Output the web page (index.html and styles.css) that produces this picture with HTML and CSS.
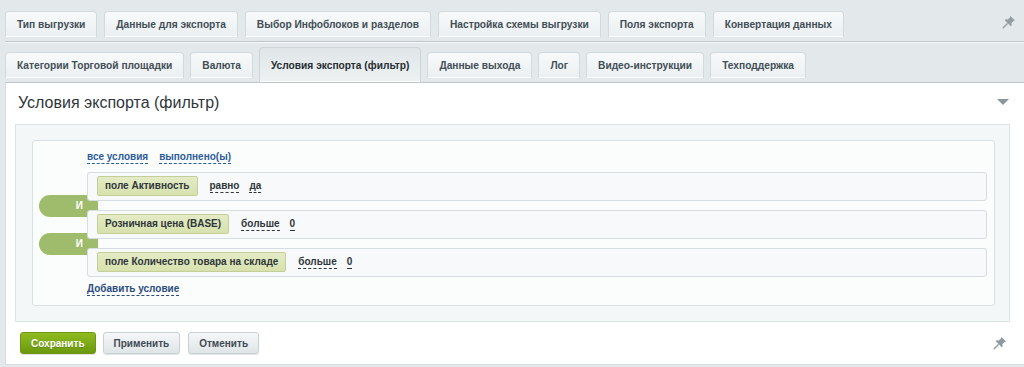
FILE: index.html
```html
<!DOCTYPE html>
<html lang="ru">
  <head>
    <meta charset="UTF-8" />
    <meta name="viewport" content="width=device-width, initial-scale=1.0" />
    <title>Условия экспорта (фильтр)</title>
    <link rel="stylesheet" href="styles.css">
  </head>
  <body>
    <div class="page">
      <div class="tabs tabs-top">
        <span class="tab">Тип выгрузки</span>
        <span class="tab">Данные для экспорта</span>
        <span class="tab">Выбор Инфоблоков и разделов</span>
        <span class="tab">Настройка схемы выгрузки</span>
        <span class="tab">Поля экспорта</span>
        <span class="tab">Конвертация данных</span>
        <span class="pin pin-top">
          <svg width="14" height="14" viewBox="0 0 14 14">
            <path d="M8.5 1 L13 5.5 L11.6 6.1 L9.4 8.3 L9.7 10.4 L8.8 11.3 L2.7 5.2 L3.6 4.3 L5.7 4.6 L7.9 2.4 Z" fill="#939da2" />
            <path d="M5.2 8.8 L1.2 12.8" stroke="#939da2" stroke-width="1.3" stroke-linecap="round" />
          </svg>
        </span>
      </div>

      <div class="tabs tabs-bottom">
        <span class="tab">Категории Торговой площадки</span>
        <span class="tab">Валюта</span>
        <span class="tab tab-active">Условия экспорта (фильтр)</span>
        <span class="tab">Данные выхода</span>
        <span class="tab">Лог</span>
        <span class="tab">Видео-инструкции</span>
        <span class="tab">Техподдержка</span>
      </div>

      <div class="panel">
        <div class="panel-head">
          <h2>Условия экспорта (фильтр)</h2>
          <span class="collapse"></span>
        </div>

        <div class="filter-box">
          <div class="tree">
            <div class="tree-head">
              <a class="link-blue">все условия</a>
              <a class="link-blue">выполнено(ы)</a>
            </div>

            <div class="conds">
              <!-- green "И" joints sit under the rows -->
              <span class="joint joint-1">И</span>
              <span class="joint joint-2">И</span>

              <div class="cond">
                <span class="cond-label">поле Активность</span>
                <a class="link-dark">равно</a>
                <a class="link-dark">да</a>
              </div>
              <div class="cond">
                <span class="cond-label">Розничная цена (BASE)</span>
                <a class="link-dark">больше</a>
                <a class="link-dark">0</a>
              </div>
              <div class="cond">
                <span class="cond-label">поле Количество товара на складе</span>
                <a class="link-dark">больше</a>
                <a class="link-dark">0</a>
              </div>
            </div>

            <a class="add-cond">Добавить условие</a>
          </div>
        </div>

        <div class="panel-foot">
          <button class="btn btn-save">Сохранить</button>
          <button class="btn">Применить</button>
          <button class="btn">Отменить</button>
          <span class="pin pin-bottom">
            <svg width="14" height="14" viewBox="0 0 14 14">
              <path d="M8.5 1 L13 5.5 L11.6 6.1 L9.4 8.3 L9.7 10.4 L8.8 11.3 L2.7 5.2 L3.6 4.3 L5.7 4.6 L7.9 2.4 Z" fill="#8f999f" />
              <path d="M5.2 8.8 L1.2 12.8" stroke="#8f999f" stroke-width="1.3" stroke-linecap="round" />
            </svg>
          </span>
        </div>
      </div>
    </div>
  </body>
</html>
```

FILE: styles.css
```css
body {
  margin: 0;
  padding: 0;
  background-color: #e3e9eb;
  font-family: "Liberation Sans", Arial, sans-serif;
  color: #3f4b54;
}

.page {
  padding-left: 5px;
}

/* tabs */

.tabs {
  display: flex;
  align-items: flex-end;
  gap: 6px;
}

.tabs-top {
  gap: 7px;
  padding: 11px 0 4px;
  border-bottom: 1px solid #bcc6ca;
}

.tabs-bottom {
  padding: 9px 0 4px;
  border-top: 1px solid #f7f9fa;
}

.tab {
  display: block;
  padding: 0 11px;
  line-height: 25px;
  font-size: 10.2px;
  font-weight: bold;
  color: #434e56;
  white-space: nowrap;
  background: linear-gradient(to bottom, #f8fafa, #eaeff1);
  border: 1px solid #d3dadd;
  border-bottom: none;
  border-radius: 4px 4px 0 0;
  box-shadow: 0 -1px 0 #fff inset;
}

.tab-active {
  padding-top: 5px;
  padding-bottom: 4px;
  margin-top: -5px;
  margin-bottom: -4px;
  color: #262d33;
  background: linear-gradient(to bottom, #e0e6e8, #edf1f2);
  border-color: #ccd4d7;
}

.pin {
  display: flex;
}

.pin-top {
  margin-left: auto;
  margin-right: 8px;
  align-self: center;
  margin-top: -4px;
}

/* panel */

.panel {
  background-color: #fff;
  border-top: 1px solid #bcc6ca;
  border-left: 1px solid #d6dde0;
  border-bottom: 1px solid #d6dde0;
}

.panel-head {
  display: flex;
  justify-content: space-between;
  align-items: center;
  padding: 10px 15px 0 12px;
}

.panel-head h2 {
  margin: 0;
  font-size: 16px;
  font-weight: normal;
  line-height: 20px;
  color: #2f363b;
}

.collapse {
  width: 0;
  height: 0;
  border-left: 6.5px solid transparent;
  border-right: 6.5px solid transparent;
  border-top: 6px solid #8b959b;
  margin-top: -2px;
}

.filter-box {
  margin: 11px 14px 0 9px;
  padding: 15px 14px 15px 16px;
  background-color: #f4f7f8;
  border: 1px solid #dde4e7;
}

.tree {
  padding: 8px 7px 9px 54px;
  font-size: 10px;
  line-height: 14px;
  background-color: #fbfcfc;
  border: 1px solid #d9e0e3;
  border-radius: 3px;
}

.tree-head {
  display: flex;
  align-items: center;
  gap: 11px;
  height: 16px;
  margin-bottom: 7px;
}

.link-blue,
.link-dark,
.add-cond {
  font-size: 10px;
  font-weight: bold;
  line-height: 12px;
  border-bottom: 1px dashed currentColor;
  cursor: pointer;
}

.link-blue {
  color: #2c5c99;
}

.link-dark {
  color: #2f363b;
  margin-left: 10px;
}

.conds {
  position: relative;
}

.cond {
  position: relative;
  z-index: 1;
  display: flex;
  align-items: center;
  padding: 3px 9px 4px;
  margin-bottom: 9px;
  background-color: #f7f9fa;
  border: 1px solid #d6dde0;
  border-radius: 3px;
}

.cond:last-of-type {
  margin-bottom: 0;
}

.cond-label {
  padding: 0 7px;
  line-height: 18px;
  font-size: 10px;
  font-weight: bold;
  color: #2f363b;
  background: linear-gradient(to bottom, #e4ebc6, #d7e1ad);
  border: 1px solid #c4cf98;
  border-radius: 2px;
  margin-right: 2px;
}

.joint {
  position: absolute;
  left: -48px;
  width: 44px;
  padding-right: 15px;
  height: 22px;
  line-height: 22px;
  text-align: right;
  font-size: 10px;
  font-weight: bold;
  color: #fff;
  background-color: #9ebc6b;
  border-radius: 11px 3px 3px 11px;
}

.joint-1 {
  top: 23px;
}

.joint-2 {
  top: 61px;
}

.add-cond {
  display: block;
  width: max-content;
  margin-top: 5px;
  line-height: 13px;
  color: #2a4d7d;
}

/* buttons */

.panel-foot {
  display: flex;
  align-items: center;
  gap: 7px;
  padding: 10px 0 10px 14px;
}

.btn {
  height: 22px;
  padding: 0 10px;
  font-family: "Liberation Sans", Arial, sans-serif;
  font-size: 10px;
  font-weight: bold;
  color: #3f4b54;
  background: linear-gradient(to bottom, #f5f7f8, #dfe5e7);
  border: 1px solid #c9d1d4;
  border-radius: 3px;
  box-shadow: 0 1px 1px rgba(0, 0, 0, 0.12);
  cursor: pointer;
}

.btn-save {
  color: #fff;
  text-shadow: 0 1px 0 rgba(0, 0, 0, 0.2);
  background: linear-gradient(to bottom, #8fbb1f, #6b990e);
  border-color: #6f9513;
}

.btn + .btn + .btn {
  margin-left: 1px;
}

.pin-bottom {
  margin-left: auto;
  margin-right: 17px;
}
```
